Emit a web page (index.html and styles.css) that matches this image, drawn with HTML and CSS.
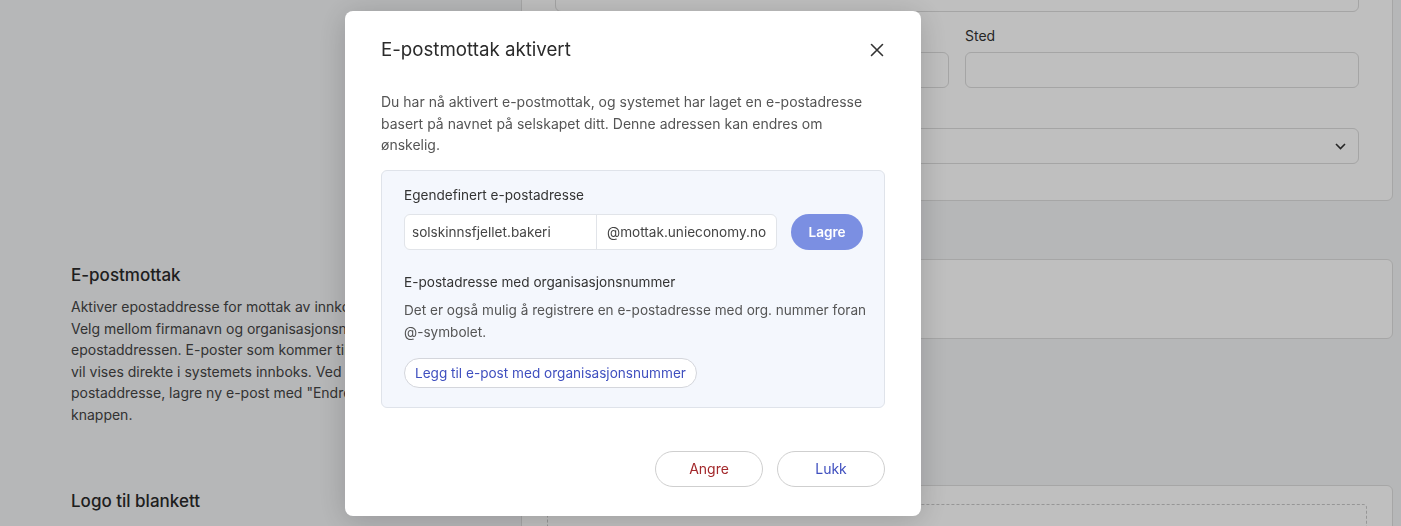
FILE: index.html
```html
<!DOCTYPE html>
<html>
<head>
    <title>Firmainnstillinger</title>
    <link rel="stylesheet" href="styles.css">
</head>
<body>
    <div class="page">
        <section class="settings-section">
            <div class="section-info"></div>
            <div class="card address-card">
                <div class="field">
                    <label>Adresse</label>
                    <input type="text" class="text-input">
                </div>
                <div class="field-row">
                    <div class="field">
                        <label>Postnr.</label>
                        <input type="text" class="text-input">
                    </div>
                    <div class="field">
                        <label>Sted</label>
                        <input type="text" class="text-input">
                    </div>
                </div>
                <div class="field">
                    <label>Land</label>
                    <div class="select">
                        <svg width="11" height="7" viewBox="0 0 11 7"><path d="M1 1l4.5 4.5L10 1" fill="none" stroke="#333" stroke-width="1.6"/></svg>
                    </div>
                </div>
            </div>
        </section>

        <section class="settings-section">
            <div class="section-info">
                <h3>E-postmottak</h3>
                <p>Aktiver epostaddresse for mottak av innkommende fakturaer.<br>
                Velg mellom firmanavn og organisasjonsnummer i<br>
                epostaddressen. E-poster som kommer til denne adressen<br>
                vil vises direkte i systemets innboks. Ved endring av e-<br>
                postaddresse, lagre ny e-post med "Endre e-post"-<br>
                knappen.</p>
            </div>
            <div class="card inbox-card">
                <span class="toggle"></span>
                <span>Aktiver e-postmottak</span>
            </div>
        </section>

        <section class="settings-section">
            <div class="section-info">
                <h3>Logo til blankett</h3>
            </div>
            <div class="card logo-card">
                <div class="dropzone"></div>
            </div>
        </section>
    </div>

    <div class="overlay">
        <div class="modal">
            <div class="modal-header">
                <h2>E-postmottak aktivert</h2>
                <button class="close-btn">
                    <svg width="14" height="14" viewBox="0 0 14 14"><path d="M1.5 1.5l11 11M12.5 1.5l-11 11" stroke="#333" stroke-width="1.6" stroke-linecap="round"/></svg>
                </button>
            </div>

            <p class="modal-text">Du har nå aktivert e-postmottak, og systemet har laget en e-postadresse basert på navnet på selskapet ditt. Denne adressen kan endres om ønskelig.</p>

            <div class="address-box">
                <div class="box-label">Egendefinert e-postadresse</div>
                <div class="address-row">
                    <div class="input-group">
                        <input type="text" class="prefix-input" value="solskinnsfjellet.bakeri">
                        <span class="domain">@mottak.unieconomy.no</span>
                    </div>
                    <button class="save-btn">Lagre</button>
                </div>

                <div class="box-label org-label">E-postadresse med organisasjonsnummer</div>
                <p class="box-text">Det er også mulig å registrere en e-postadresse med org. nummer foran @-symbolet.</p>
                <button class="outline-btn">Legg til e-post med organisasjonsnummer</button>
            </div>

            <div class="modal-footer">
                <button class="footer-btn cancel-btn">Angre</button>
                <button class="footer-btn done-btn">Lukk</button>
            </div>
        </div>
    </div>
</body>
</html>
```

FILE: styles.css
```css
* {
    margin: 0;
    padding: 0;
    box-sizing: border-box;
    font-family: 'Inter', 'Liberation Sans', sans-serif;
}

body {
    background: #f3f4f6;
    color: #333;
    overflow: hidden;
}

/* page behind the dialog */

.page {
    margin-top: -81px;
}

.settings-section {
    display: grid;
    grid-template-columns: 450px 872px;
    padding-left: 71px;
    margin-bottom: 58px;
}

.section-info {
    padding-top: 4px;
    padding-right: 30px;
}

.section-info h3 {
    font-size: 17px;
    font-weight: 500;
    line-height: 24px;
    color: #2a2a2a;
    margin-bottom: 9px;
}

.section-info p {
    font-size: 14px;
    line-height: 21.5px;
    color: #444;
    margin-bottom: 2px;
}

.card {
    background: #fff;
    border: 1px solid #dedede;
    border-radius: 6px;
    align-self: start;
}

.address-card {
    display: flex;
    flex-direction: column;
    gap: 14px;
    padding: 30px 33px 36px;
}

.field label {
    display: block;
    font-size: 14px;
    line-height: 20px;
    margin-bottom: 6px;
    color: #333;
}

.text-input {
    width: 100%;
    height: 36px;
    border: 1px solid #dcdcdc;
    border-radius: 6px;
    background: #fff;
}

.field-row {
    display: grid;
    grid-template-columns: 1fr 1fr;
    gap: 16px;
}

.select {
    height: 36px;
    border: 1px solid #dcdcdc;
    border-radius: 6px;
    display: flex;
    align-items: center;
    justify-content: flex-end;
    padding-right: 12px;
}

.inbox-card {
    height: 80px;
    display: flex;
    align-items: center;
    gap: 12px;
    padding: 0 25px;
    font-size: 14px;
}

.toggle {
    width: 36px;
    height: 20px;
    border-radius: 10px;
    background: #7b8fe2;
}

.logo-card {
    padding: 18px 25px;
}

.dropzone {
    height: 120px;
    border: 1px dashed #c8c8c8;
    border-radius: 4px;
}

/* dialog */

.overlay {
    position: fixed;
    inset: 0;
    background: rgba(0, 0, 0, 0.25);
    display: flex;
    align-items: flex-start;
    padding: 11px 0 0 345px;
}

.modal {
    width: 576px;
    background: #fff;
    border-radius: 8px;
    padding: 27px 36px 29px;
    box-shadow: 0 4px 30px rgba(0, 0, 0, 0.18);
}

.modal-header {
    display: flex;
    justify-content: space-between;
    align-items: center;
}

.modal-header h2 {
    font-size: 18.7px;
    font-weight: 400;
    line-height: 24px;
    color: #2b2b2b;
}

.close-btn {
    width: 14px;
    height: 14px;
    border: none;
    background: none;
    cursor: pointer;
    display: flex;
    margin-right: 1px;
}

.modal-text {
    margin-top: 29px;
    font-size: 14px;
    line-height: 21.5px;
    color: #555;
}

.address-box {
    margin-top: 14px;
    display: flex;
    flex-direction: column;
    align-items: flex-start;
    background: #f4f7fd;
    border: 1px solid #dfe3ea;
    border-radius: 6px;
    padding: 14px 10px 19px 22px;
}

.box-label {
    font-size: 13.6px;
    line-height: 20px;
    color: #333;
}

.address-row {
    display: flex;
    align-items: center;
    gap: 14px;
    margin-top: 9px;
}

.input-group {
    display: flex;
    height: 36px;
    background: #fff;
    border: 1px solid #e1e4e9;
    border-radius: 6px;
}

.prefix-input {
    width: 191px;
    border: none;
    background: none;
    padding: 0 7px;
    font-size: 13.6px;
    color: #444;
    outline: none;
}

.domain {
    border-left: 1px solid #e1e4e9;
    padding: 0 10px;
    line-height: 34px;
    font-size: 13.6px;
    color: #444;
}

.save-btn {
    width: 72px;
    height: 36px;
    border: none;
    border-radius: 18px;
    background: #7b8fe2;
    color: #fff;
    font-size: 13.6px;
    font-weight: 600;
    cursor: pointer;
}

.org-label {
    margin-top: 22px;
}

.box-text {
    margin-top: 7px;
    font-size: 13.6px;
    line-height: 22px;
    color: #555;
}

.outline-btn {
    margin-top: 15px;
    height: 30px;
    padding: 0 10px;
    border: 1px solid #d4d6dc;
    border-radius: 15px;
    background: #fff;
    color: #3f4fbf;
    font-size: 13.6px;
    cursor: pointer;
}

.modal-footer {
    display: flex;
    justify-content: flex-end;
    gap: 14px;
    margin-top: 43px;
}

.footer-btn {
    width: 108px;
    height: 36px;
    border: 1px solid #cfcfcf;
    border-radius: 18px;
    background: #fff;
    font-size: 14px;
    cursor: pointer;
}

.cancel-btn {
    color: #a3282b;
}

.done-btn {
    color: #3f4fbf;
}
```
